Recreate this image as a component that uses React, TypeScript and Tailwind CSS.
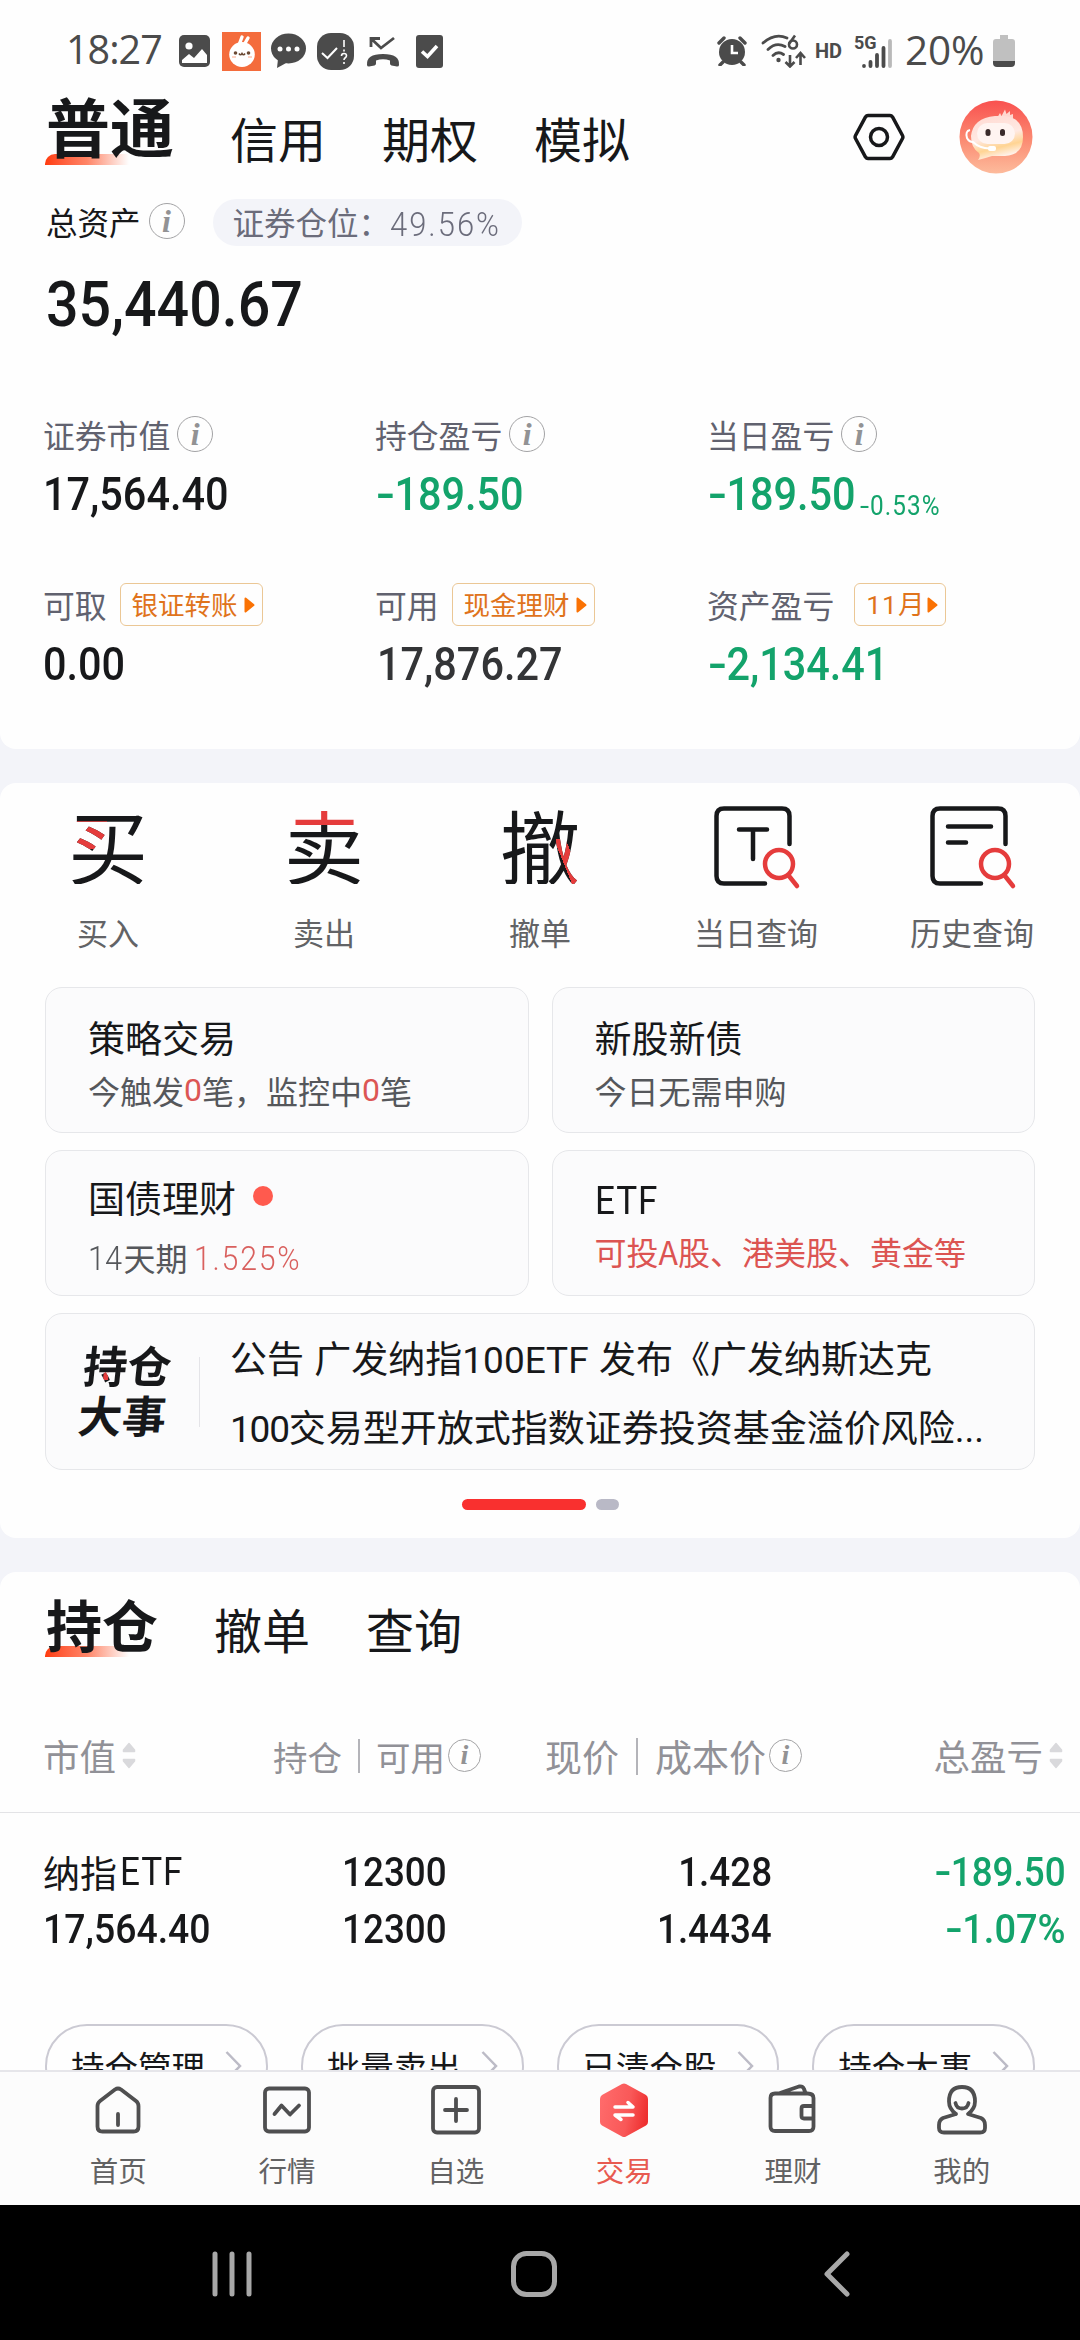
import React from "react";

const cjk = "font-['Noto_Sans_CJK_SC',sans-serif]";
const latin = "font-['Roboto',sans-serif]";

function Num({ text, className = "" }: { text: string; className?: string }) {
  const negative = text.startsWith("-");
  return (
    <span className={`inline-block whitespace-nowrap leading-none ${latin} ${className}`}>
      {negative && <span className="mr-[0.1em] ml-[0.03em] inline-block origin-left scale-x-[1.35]">-</span>}
      {negative ? text.slice(1) : text}
    </span>
  );
}

function Info({ small = false }: { small?: boolean }) {
  return (
    <span
      className={`inline-flex shrink-0 items-center justify-center rounded-full border-[1.5px] border-[#a3a3a5] font-['Liberation_Serif',serif] leading-none font-bold text-[#929294] italic ${
        small ? "size-[33px] text-[28px]" : "size-[36px] text-[32px]"
      }`}
    >
      i
    </span>
  );
}

function Underline({ className = "" }: { className?: string }) {
  return (
    <span
      className={`absolute -left-px h-[11px] w-[84px] rounded-tl-[10px] bg-linear-to-r from-[#ff3b0c] via-[#ff6f4c]/85 to-[#ff8a6e]/0 ${className}`}
    />
  );
}

function StatusBar() {
  return (
    <div className="flex h-[92px] items-center pt-[10px] pr-[65px] pl-[66px] text-[#4b4b4b]">
      <span className="mb-[2px] w-[113px] font-['Open_Sans',sans-serif] text-[39.500px] leading-none font-normal tracking-[-1px]">18:27</span>
      <svg className="h-[32px] w-[31px]" viewBox="0 0 31 32">
        <rect width="31" height="32" rx="5" fill="#4b4b4b" />
        <circle cx="10" cy="11" r="3.6" fill="#fff" />
        <path d="M3 28V25L10 19L15 23L23 14L28 20V28Z" fill="#fff" />
      </svg>
      <svg className="ml-[12px] h-[39px] w-[39px]" viewBox="0 0 39 39">
        <rect width="39" height="39" fill="#f46c3c" />
        <path d="M17 13L20 5M22 13L26 6" stroke="#fff" strokeWidth="3.4" strokeLinecap="round" />
        <ellipse cx="20" cy="22.500" rx="12.800" ry="12.500" fill="#fff" />
        <circle cx="13.500" cy="21" r="1.800" fill="#6b4a34" />
        <circle cx="26.500" cy="21" r="1.800" fill="#6b4a34" />
        <path d="M17 21.500q1.500 2.500 3 0q1.500 2.500 3 0" fill="none" stroke="#6b4a34" strokeWidth="1.600" />
        <path d="M10 25h4M26 25h4" stroke="#ffc5b0" strokeWidth="1.600" />
      </svg>
      <svg className="ml-[10px] h-[36px] w-[35px]" viewBox="0 0 35 36">
        <ellipse cx="17.500" cy="15.500" rx="17.500" ry="15" fill="#4b4b4b" />
        <path d="M7 26L6 35L17 29Z" fill="#4b4b4b" />
        <circle cx="9" cy="16" r="2.500" fill="#fff" />
        <circle cx="17.500" cy="16" r="2.500" fill="#fff" />
        <circle cx="26" cy="16" r="2.500" fill="#fff" />
      </svg>
      <svg className="ml-[11px] h-[37px] w-[37px]" viewBox="0 0 37 37">
        <rect width="37" height="37" rx="14" fill="#4b4b4b" />
        <path d="M5 20L10.500 25L20 15" fill="none" stroke="#fff" strokeWidth="2" />
        <path d="M27 7V14M27 16.500V18.500M24.500 23q0-2.500 2.500-2.500t2.500 2.200q0 1.300-1.500 2.300q-1 .7-1 2M27 29V31" fill="none" stroke="#fff" strokeWidth="1.600" />
      </svg>
      <svg className="ml-[12px] h-[31px] w-[34px]" viewBox="0 0 34 31">
        <path d="M5 11V2.500H14M5.500 3L15 12L28 2" fill="none" stroke="#4b4b4b" strokeWidth="2.800" />
        <path d="M1 29Q0 18 17 18T33 29Q33 30.500 31 30.500L25.500 29.500Q24 29 24 27.500V24.500Q17 22 10 24.500V27.500Q10 29 8.500 29.500L3 30.500Q1 30.500 1 29Z" fill="#4b4b4b" />
      </svg>
      <svg className="ml-[16px] h-[33px] w-[27px]" viewBox="0 0 27 33">
        <rect width="27" height="33" rx="3" fill="#4b4b4b" />
        <path d="M6 16.500L11.500 21.500L21 11" fill="none" stroke="#fff" strokeWidth="3.600" />
      </svg>
      <div className="ml-auto flex items-center">
        <svg className="h-[30px] w-[30px]" viewBox="0 0 30 30">
          <circle cx="15" cy="16" r="13" fill="#4b4b4b" />
          <path d="M2 7L7 2M28 7L23 2M6 26L3 29M24 26L27 29" stroke="#4b4b4b" strokeWidth="3.400" strokeLinecap="round" />
          <path d="M15 9V17H21" fill="none" stroke="#fff" strokeWidth="2.600" />
        </svg>
        <svg className="ml-[14px] h-[34px] w-[45px]" viewBox="0 0 45 34">
          <path d="M2 9Q14 -1.500 26 4M7 15.500Q15 7.500 24 12.500M12 21.500Q17 16.500 22.500 20.500" fill="none" stroke="#4b4b4b" strokeWidth="2.800" strokeLinecap="round" />
          <circle cx="17.500" cy="26" r="2.200" fill="#4b4b4b" />
          <path d="M29 21V32M24.500 28L29 32.500L33.500 28M39.500 31V19.500M35 24L39.500 19L44 24" fill="none" stroke="#4b4b4b" strokeWidth="2.600" />
          <circle cx="32" cy="10.500" r="4" fill="none" stroke="#4b4b4b" strokeWidth="2.600" />
          <path d="M28.300 9.500L34 1.500" stroke="#4b4b4b" strokeWidth="2.600" />
        </svg>
        <span className={`${latin} ml-[9px] w-[27px] text-[20px] leading-none font-bold`}>HD</span>
        <div className="ml-[12px] flex h-[34px] w-[40px] items-start">
          <span className={`${latin} w-[23px] text-[18px] leading-none font-bold`}>5G</span>
          <svg className="-ml-[16px] mt-[4px] h-[30px] w-[32px] shrink-0" viewBox="0 0 32 30">
            <path d="M3 28V28.100M9.500 24V28M16 17V28M22.500 10V28" stroke="#4b4b4b" strokeWidth="3.800" strokeLinecap="round" />
            <path d="M29 3V28" stroke="#b9b9b9" strokeWidth="3.800" strokeLinecap="round" />
          </svg>
        </div>
        <span className="mb-[2px] ml-[11px] w-[84px] font-['Open_Sans',sans-serif] text-[40.500px] leading-none tracking-[-0.200px]">20%</span>
        <svg className="ml-[4px] h-[32px] w-[22px]" viewBox="0 0 22 32">
          <path d="M7 0H15V4H19Q22 4 22 7V26H0V7Q0 4 3 4H7Z" fill="#c0c0c0" />
          <path d="M0 26H22V28Q22 32 18 32H4Q0 32 0 28Z" fill="#4b4b4b" />
        </svg>
      </div>
    </div>
  );
}

function Avatar() {
  return (
    <svg className="ml-[54px] size-[74px]" viewBox="0 0 74 74">
      <defs>
        <linearGradient id="av-bg" x1="0" y1="0" x2="0" y2="1">
          <stop offset="0" stopColor="#f9514f" />
          <stop offset="0.550" stopColor="#fb8c73" />
          <stop offset="1" stopColor="#fdbb9c" />
        </linearGradient>
        <linearGradient id="av-face" x1="0" y1="0" x2="0.300" y2="1">
          <stop offset="0" stopColor="#ffd9d2" />
          <stop offset="0.550" stopColor="#ffe9e2" />
          <stop offset="0.800" stopColor="#ffd493" />
          <stop offset="1" stopColor="#fff0e6" />
        </linearGradient>
      </defs>
      <circle cx="37" cy="37" r="36.500" fill="url(#av-bg)" />
      <path d="M38 18L41 13L42.500 16L46 9.500L47.500 14L51 11V15L54 14L54 22Z" fill="#ffd8d0" />
      <path d="M36 16H46Q64 18 64 37Q64 55 46 56H33Q27 58 19 60Q22 56 20 53Q12 48 12 36Q14 18 36 16Z" fill="url(#av-face)" />
      <rect x="18" y="23" width="38" height="21" rx="10.500" fill="#fff4f1" />
      <rect x="26.500" y="29" width="5" height="7" rx="2.500" fill="#3a2a2a" />
      <rect x="41" y="29" width="5" height="7" rx="2.500" fill="#3a2a2a" />
      <path d="M11 30Q6 31 8 38Q10 42 14 42Q20 48 31 48.500" fill="none" stroke="#fff" strokeWidth="2" />
      <rect x="29" y="46" width="8" height="5" rx="2" fill="#fff" />
    </svg>
  );
}

function Header() {
  return (
    <div className={`flex h-[90px] items-center pr-[47px] pl-[46px] text-[48px] leading-none text-[#17181a] ${cjk}`}>
      <div className="relative mb-[26px] text-[64px] leading-none font-bold">
        <Underline className="top-[62px]" />
        <span className="relative">普通</span>
      </div>
      <span className="ml-[56px]">信用</span>
      <span className="ml-[56px]">期权</span>
      <span className="ml-[56px]">模拟</span>
      <svg className="ml-auto h-[48px] w-[52px]" viewBox="0 0 52 48">
        <path d="M15 2.500H37Q38.500 2.500 39.500 4L49.500 22.500Q50.300 24 49.500 25.500L39.500 44Q38.500 45.500 37 45.500H15Q13.500 45.500 12.500 44L2.500 25.500Q1.700 24 2.500 22.500L12.500 4Q13.500 2.500 15 2.500Z" fill="none" stroke="#17181a" strokeWidth="3.500" />
        <circle cx="26" cy="24" r="8.500" fill="none" stroke="#17181a" strokeWidth="3.500" />
      </svg>
      <Avatar />
    </div>
  );
}

function Chip({ children, wide = true }: { children: React.ReactNode; wide?: boolean }) {
  return (
    <span className={`flex h-[43px] items-center justify-between rounded-[6px] border border-[#ebc795] pr-[7px] pl-[11px] text-[26.500px] leading-none text-[#e0731b] ${wide ? "w-[143px]" : "w-[92px]"}`}>
      <span className="-mt-px whitespace-nowrap">{children}</span>
      <svg className="h-[16px] w-[11px] shrink-0" viewBox="0 0 11 16">
        <path d="M1.500 1.500L9.500 8L1.500 14.500Z" fill="#fa7204" stroke="#fa7204" strokeWidth="2" strokeLinejoin="round" />
      </svg>
    </span>
  );
}

const metric = `${latin} origin-left scale-x-[0.900] text-[46px] font-medium`;

function Summary() {
  return (
    <section className="h-[749px] rounded-b-[16px] bg-[#fefefe]">
      <StatusBar />
      <Header />
      <div className={`flex h-[80px] items-center pl-[46px] text-[31.500px] leading-none text-[#17181a] ${cjk}`}>
        <span>总资产</span>
        <span className="-mt-[2px] ml-[8px] flex"><Info /></span>
        <span className="ml-[28px] flex h-[47px] w-[309px] items-center rounded-full bg-[#f3f4f9] pl-[20px] text-[#6b6c7b]">
          <span>证券仓位：</span>
          <Num text="49.56%" className="mt-[3px] origin-left scale-x-[0.910] text-[34px] font-light tracking-[2.200px]" />
        </span>
      </div>
      <div className="flex h-[82px] items-center pt-[2px] pl-[46px] text-[#17181a]">
        <Num text="35,440.67" className="origin-left scale-x-[0.910] text-[63px] font-medium" />
      </div>
      <div className={`mt-[61px] grid grid-cols-[332px_332px_1fr] pl-[43px] text-[31.800px] leading-none text-[#61626f] ${cjk}`}>
        {["证券市值", "持仓盈亏", "当日盈亏"].map((t) => (
          <div key={t} className="flex h-[60px] items-center">
            <span>{t}</span>
            <span className="-mt-[2px] ml-[7px] flex"><Info /></span>
          </div>
        ))}
        <div className="flex h-[58px] items-center text-[#17181a]"><Num text="17,564.40" className={metric} /></div>
        <div className="flex h-[58px] items-center text-[#13a36b]"><Num text="-189.50" className={metric} /></div>
        <div className="flex h-[58px] items-center text-[#13a36b]">
          <Num text="-189.50" className={metric} />
          <Num text="-0.53%" className="mt-[25px] -ml-[13px] origin-left scale-x-[0.900] text-[27px] tracking-[1.200px]" />
        </div>
        <div className="mt-[52px] flex h-[59px] items-center"><span className="mr-[13px]">可取</span><Chip>银证转账</Chip></div>
        <div className="mt-[52px] flex h-[59px] items-center"><span className="mr-[13px]">可用</span><Chip>现金理财</Chip></div>
        <div className="mt-[52px] flex h-[59px] items-center">
          <span className="mr-[20px]">资产盈亏</span>
          <Chip wide={false}><span className={`${latin} tracking-[1px]`}>11</span>月</Chip>
        </div>
        <div className="flex h-[58px] items-center pt-px text-[#17181a]"><Num text="0.00" className={metric} /></div>
        <div className="flex h-[58px] items-center pt-px pl-[2px] text-[#333436]"><Num text="17,876.27" className={metric} /></div>
        <div className="flex h-[58px] items-center pt-px text-[#13a36b]"><Num text="-2,134.41" className={metric} /></div>
      </div>
    </section>
  );
}

const glyph = `${cjk} mb-[10px] flex h-[82px] w-[80px] items-center justify-center bg-clip-text bg-no-repeat text-[80px] leading-none font-normal text-transparent`;

function QueryIcon({ kind }: { kind: "today" | "history" }) {
  return (
    <svg className="ml-[4px] h-[84px] w-[88px]" viewBox="0 0 88 84">
      <path d="M51 77.500H10Q2.500 77.500 2.500 70V10Q2.500 2.500 10 2.500H68Q75.500 2.500 75.500 10V38" fill="none" stroke="#17181a" strokeWidth="4.500" strokeLinecap="round" />
      {kind === "today" ? (
        <path d="M25 23.500H53M39 23.500V53" stroke="#17181a" strokeWidth="4.500" strokeLinecap="round" />
      ) : (
        <path d="M18 20.500H61M18 36.500H36" stroke="#17181a" strokeWidth="4.500" strokeLinecap="round" />
      )}
      <circle cx="65" cy="58" r="14" fill="none" stroke="#e53c3c" strokeWidth="4.500" />
      <path d="M75 70L83 80" stroke="#e53c3c" strokeWidth="4.500" strokeLinecap="round" />
    </svg>
  );
}

function Actions() {
  const items: { label: string; icon: React.ReactNode }[] = [
    {
      label: "买入",
      icon: <span className={`${glyph} bg-[linear-gradient(#e53c3c,#e53c3c),linear-gradient(#17181a,#17181a)] [background-position:0_19px,0_0] [background-size:39px_28px,100%_100%]`}>买</span>,
    },
    {
      label: "卖出",
      icon: <span className={`${glyph} bg-[linear-gradient(#e53c3c_0,#e53c3c_23px,#17181a_23px)]`}>卖</span>,
    },
    {
      label: "撤单",
      icon: <span className={`${glyph} bg-[linear-gradient(68deg,transparent_38%,#e53c3c_38%,#e53c3c_66%,transparent_66%),linear-gradient(#17181a,#17181a)] [background-position:56px_37px,0_0] [background-size:24px_45px,100%_100%]`}>撤</span>,
    },
    { label: "当日查询", icon: <QueryIcon kind="today" /> },
    { label: "历史查询", icon: <QueryIcon kind="history" /> },
  ];
  return (
    <div className={`grid grid-cols-5 ${cjk}`}>
      {items.map((it) => (
        <div key={it.label} className="flex flex-col items-center">
          <div className="flex h-[130px] items-center">{it.icon}</div>
          <span className="h-[38px] text-[31px] leading-[38px] text-[#626366]">{it.label}</span>
        </div>
      ))}
    </div>
  );
}

const card = "h-[146px] rounded-[17px] border border-[#e6e7ea] bg-[#fbfbfc] pl-[42px]";
const cardTitle = "flex items-center text-[37px] leading-none text-[#17181a]";
const cardSub = "flex items-center text-[32px] leading-none text-[#55575b]";

function Cards() {
  return (
    <div className={`mx-[45px] mt-[36px] grid grid-cols-2 gap-x-[23px] gap-y-[17px] ${cjk}`}>
      <div className={card}>
        <div className={`${cardTitle} mt-[31px]`}>策略交易</div>
        <div className={`${cardSub} mt-[18px]`}>
          今触发<span className={`${latin} text-[#dc5654]`}>0</span>笔，监控中<span className={`${latin} text-[#dc5654]`}>0</span>笔
        </div>
      </div>
      <div className={card}>
        <div className={`${cardTitle} mt-[31px]`}>新股新债</div>
        <div className={`${cardSub} mt-[18px]`}>今日无需申购</div>
      </div>
      <div className={card}>
        <div className={`${cardTitle} mt-[28px]`}>
          国债理财<span className="-mt-[4px] ml-[17px] size-[20px] rounded-full bg-[#ff5a4e]" />
        </div>
        <div className={`${cardSub} mt-[23px] text-[31px]`}>
          <Num text="14" className="mt-[2px] mr-[-1px] origin-left scale-x-[0.930] text-[33px] font-light" />天期
          <Num text="1.525%" className="mt-[2px] ml-[6px] origin-left scale-x-[0.890] text-[34px] font-light tracking-[2px] text-[#d9605e]" />
        </div>
      </div>
      <div className={card}>
        <div className="mt-[31px] flex text-[#17181a]">
          <Num text="ETF" className="origin-left scale-x-[0.900] text-[39px] tracking-[1px]" />
        </div>
        <div className={`${cardSub} mt-[14px] text-[#dc5452]`}>可投A股、港美股、黄金等</div>
      </div>
      <div className="col-span-2 flex h-[157px] items-center rounded-[17px] border border-[#e6e7ea] bg-[#fbfbfc] pl-[35px] text-[#17181a]">
        <div className="relative mb-[5px] w-[92px] -skew-x-6 text-[44px] leading-[50px] font-bold">
          <div className="bg-[linear-gradient(#e53c3c,#e53c3c),linear-gradient(#17181a,#17181a)] [background-size:5px_8px,100%_100%] [background-position:21px_33px,0_0] bg-no-repeat bg-clip-text text-transparent">持仓</div>
          <div>大事</div>
        </div>
        <span className="ml-[26px] h-[70px] w-px bg-[#e4e4e8]" />
        <div className="mt-[3px] ml-[30px] text-[37px] leading-[67px] whitespace-nowrap">
          <div className="[word-spacing:2px]">公告 广发纳指<span className={latin}>100ETF</span> 发布《广发纳斯达克</div>
          <div className="-mt-px"><span className={`${latin} tracking-[-1.200px]`}>100</span>交易型开放式指数证券投资基金溢价风险<span className={latin}>...</span></div>
        </div>
      </div>
    </div>
  );
}

function Sort() {
  return (
    <svg className="mb-[2px] h-[27px] w-[14px] shrink-0" viewBox="0 0 14 27">
      <path d="M7 1.500L12.500 8V9.500H1.500V8Z" fill="#d9d9dc" stroke="#d9d9dc" strokeWidth="1.500" strokeLinejoin="round" />
      <path d="M7 25.500L12.500 19V17.500H1.500V19Z" fill="#d9d9dc" stroke="#d9d9dc" strokeWidth="1.500" strokeLinejoin="round" />
    </svg>
  );
}

const cell = "origin-right scale-x-[0.920] text-[40px] font-medium";

function Holdings() {
  return (
    <section className={`mt-[34px] h-[498px] overflow-hidden rounded-t-[16px] bg-[#fefefe] leading-none text-[#17181a] ${cjk}`}>
      <div className="flex h-[116px] items-center pb-[4px] pl-[46px] text-[48px]">
        <div className="relative mb-[10px] text-[56px] leading-none font-bold">
          <Underline className="top-[51px]" />
          <span className="relative">持仓</span>
        </div>
        <span className="ml-[56px]">撤单</span>
        <span className="ml-[56px]">查询</span>
      </div>
      <div className="flex h-[125px] items-center border-b border-[#e3e3e6] pt-[12px] pl-[43px] text-[36.500px] text-[#919197]">
        <div className="flex w-[230px] items-center"><span className="mr-[6px]">市值</span><Sort /></div>
        <div className="flex w-[272px] items-center text-[34.500px]">
          持仓<span className="mx-[16px] h-[34px] w-[2px] bg-[#b4b4b9]" />可用<span className="mb-[2px] ml-[3px] flex"><Info small /></span>
        </div>
        <div className="flex items-center text-[37px]">
          现价<span className="mx-[17px] h-[37px] w-[2px] bg-[#b4b4b9]" />成本价<span className="mb-[2px] ml-[3px] flex"><Info small /></span>
        </div>
        <div className="mr-[17px] ml-auto flex items-center"><span className="mr-[6px]">总盈亏</span><Sort /></div>
      </div>
      <div className="grid grid-cols-[200px_204px_325px_294px] pt-[31px] pl-[43px]">
        <div className="flex h-[57px] items-center text-[37px]"><span>纳指</span><Num text="ETF" className="ml-[3px] origin-left scale-x-[0.900] text-[39px] tracking-[1px]" /></div>
        <div className="flex h-[57px] items-center justify-end"><Num text="12300" className={cell} /></div>
        <div className="flex h-[57px] items-center justify-end"><Num text="1.428" className={cell} /></div>
        <div className="flex h-[57px] items-center justify-end text-[#13a36b]"><Num text="-189.50" className={cell} /></div>
        <div className="flex h-[57px] items-center"><Num text="17,564.40" className="origin-left scale-x-[0.935] text-[40px] font-medium" /></div>
        <div className="flex h-[57px] items-center justify-end"><Num text="12300" className={cell} /></div>
        <div className="flex h-[57px] items-center justify-end"><Num text="1.4434" className={cell} /></div>
        <div className="flex h-[57px] items-center justify-end text-[#13a36b]"><Num text="-1.07%" className="origin-right scale-x-[0.950] text-[40px] font-medium" /></div>
      </div>
      <div className="mt-[66px] grid grid-cols-4 gap-x-[33px] px-[45px]">
        {["持仓管理", "批量卖出", "已清仓股", "持仓大事"].map((t) => (
          <div key={t} className="flex h-[84px] items-center rounded-full border-2 border-[#cbcad3] pl-[24px]">
            <span className="text-[33.500px]">{t}</span>
            <svg className="ml-[20px] h-[30px] w-[17px]" viewBox="0 0 17 30">
              <path d="M1.500 1L15 15L1.500 29" fill="none" stroke="#bcbbc6" strokeWidth="2.500" />
            </svg>
          </div>
        ))}
      </div>
    </section>
  );
}

const navIcons: Record<string, React.ReactNode> = {
  首页: <path d="M5.500 24V44.500Q5.500 49.500 10.500 49.500H41.500Q46.500 49.500 46.500 44.500V24Q46.500 21 44 19L29 7.500Q26 5.500 23 7.500L8 19Q5.500 21 5.500 24ZM26 32V43" />,
  行情: (
    <>
      <rect x="4" y="6.500" width="44" height="43" rx="4" />
      <path d="M13.500 32L20.500 23.500L29 32.500L38 23.500" />
    </>
  ),
  自选: (
    <>
      <rect x="3" y="5" width="46" height="45.500" rx="4" />
      <path d="M26 17V39M15 28H37" />
    </>
  ),
  理财: (
    <>
      <path d="M8 11.500H40.500Q46.500 11.500 46.500 16V44.500Q46.500 49 42 49H8Q3.500 49 3.500 44.500V16Q3.500 11.500 8 11.500ZM46.500 24H37Q34.500 24 34.500 26.500V34Q34.500 36.500 37 36.500H46.500M13 11L32 4.500Q36 4 37 7L38.500 11" />
    </>
  ),
  我的: (
    <path d="M20 32Q13 27 13 19.500Q13 5 26 5T39 19.500Q39 27 32 32L45 36Q49 38 49 43V46Q49 50.500 44 50.500H8Q3 50.500 3 46V43Q3 38 7 36L20 32M19.500 21Q20.500 26.500 26 26.500T32.500 21" />
  ),
};

function TabBar() {
  return (
    <nav className={`grid h-[135px] grid-cols-6 border-t-2 border-[#e6e6ea] bg-[#fcfcfc] px-[34px] ${cjk}`}>
      {["首页", "行情", "自选", "交易", "理财", "我的"].map((t) => (
        <div key={t} className="flex flex-col items-center pt-[10px]">
          {t === "交易" ? (
            <svg className="h-[56px] w-[52px]" viewBox="0 0 52 56">
              <defs>
                <linearGradient id="trade" x1="0" y1="0.300" x2="1" y2="0.500">
                  <stop offset="0" stopColor="#ff6b6b" />
                  <stop offset="0.600" stopColor="#f95858" />
                  <stop offset="1" stopColor="#ee2f2f" />
                </linearGradient>
              </defs>
              <path d="M24 2Q26 1 28 2L48 13Q50 14.500 50 17V40Q50 42.500 48 43.500L28 54.500Q26 55.500 24 54.500L4 43.500Q2 42.500 2 40V17Q2 14.500 4 13Z" fill="url(#trade)" />
              <path d="M17 25H35L30 20.500M35 33H17L23 37.500" fill="none" stroke="#fff" strokeWidth="3.500" strokeLinecap="round" strokeLinejoin="round" />
            </svg>
          ) : (
            <svg className="h-[56px] w-[52px]" viewBox="0 0 52 56" fill="none" stroke="#4f4f50" strokeWidth="3.800" strokeLinecap="round" strokeLinejoin="round">
              {navIcons[t]}
            </svg>
          )}
          <span className={`mt-[18px] text-[28.500px] leading-none ${t === "交易" ? "text-[#e85a50]" : "text-[#626263]"}`}>{t}</span>
        </div>
      ))}
    </nav>
  );
}

function SystemNav() {
  return (
    <div className="flex h-[135px] items-center bg-black pt-[3px] pl-[212px]">
      <svg className="h-[46px] w-[40px]" viewBox="0 0 40 46">
        <path d="M3 3V43M20 3V43M37 3V43" stroke="#a8a8a8" strokeWidth="5" strokeLinecap="round" />
      </svg>
      <svg className="ml-[259px] h-[46px] w-[46px]" viewBox="0 0 46 46">
        <rect x="2.500" y="2.500" width="41" height="41" rx="13" fill="none" stroke="#a8a8a8" strokeWidth="5" />
      </svg>
      <svg className="ml-[266px] h-[46px] w-[27px]" viewBox="0 0 27 46">
        <path d="M24 3L4 23L24 43" fill="none" stroke="#a8a8a8" strokeWidth="5" strokeLinecap="round" strokeLinejoin="round" />
      </svg>
    </div>
  );
}

export default function App() {
  return (
    <main className="h-[2340px] w-[1080px] overflow-hidden bg-[#f3f4f9]">
      <Summary />
      <section className="mt-[34px] h-[755px] rounded-[16px] bg-[#fefefe]">
        <Actions />
        <Cards />
        <div className="mt-[29px] flex justify-center gap-[10px]">
          <span className="h-[11px] w-[124px] rounded-full bg-[#f9302f]" />
          <span className="h-[11px] w-[23px] rounded-full bg-[#b9b9c6]" />
        </div>
      </section>
      <Holdings />
      <TabBar />
      <SystemNav />
    </main>
  );
}
